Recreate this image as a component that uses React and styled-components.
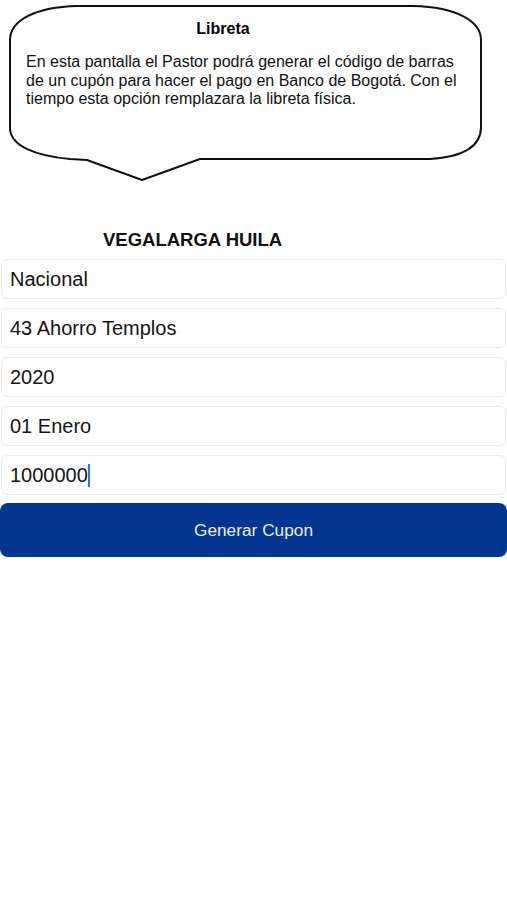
import React from "react";
import styled, { createGlobalStyle } from "styled-components";

const Global = createGlobalStyle`
  html, body { margin: 0; padding: 0; background: #ffffff; }
  body { font-family: "Liberation Sans", Arial, sans-serif; }
`;

const Page = styled.div`
  width: 507px;
  min-height: 900px;
  background: #ffffff;
  display: flex;
  flex-direction: column;
`;

const Bubble = styled.section`
  position: relative;
  height: 186px;
  padding: 19px 0 0 26px;
  box-sizing: border-box;
`;

const BubbleShape = styled.svg`
  position: absolute;
  left: 0;
  top: 0;
  z-index: 0;
`;

const BubbleTitle = styled.h2`
  position: relative;
  margin: 0;
  width: 394px;
  text-align: center;
  font-family: "Liberation Sans", Arial, sans-serif;
  font-weight: 700;
  font-size: 16px;
  line-height: 19px;
  color: #000;
`;

const BubbleText = styled.p`
  position: relative;
  margin: 15px 0 0;
  font-family: "Liberation Sans", Arial, sans-serif;
  font-size: 16px;
  line-height: 18.5px;
  color: #111;
  white-space: nowrap;
`;

const Title = styled.h1`
  margin: 43px 0 8px;
  padding-left: 103px;
  font-family: "Liberation Sans", Arial, sans-serif;
  font-weight: 700;
  font-size: 18.5px;
  line-height: 22px;
  color: #111;
`;

const Form = styled.div`
  display: flex;
  flex-direction: column;
  gap: 9px;
  padding: 0 1px;
`;

const Field = styled.div`
  height: 40px;
  box-sizing: border-box;
  border: 1px solid #ebebeb;
  border-radius: 6px;
  box-shadow: 0 0 1px rgba(0, 0, 0, 0.04);
  display: flex;
  align-items: center;
  padding-left: 8px;
  font-family: "Liberation Sans", Arial, sans-serif;
  font-size: 20px;
  color: #141414;
`;

const Caret = styled.span`
  display: inline-block;
  width: 2px;
  height: 23px;
  background: #3b6fe0;
`;

const Button = styled.button`
  margin: 8px 0 0;
  height: 54px;
  width: 507px;
  border: none;
  border-radius: 8px;
  background: #033690;
  color: #e9eef8;
  font-family: "Liberation Sans", Arial, sans-serif;
  font-size: 17.3px;
  cursor: pointer;
`;

const fields = ["Nacional", "43 Ahorro Templos", "2020", "01 Enero"];

export default function App() {
  return (
    <Page>
      <Global />
      <Bubble>
        <BubbleShape width="507" height="186" viewBox="0 0 507 186">
          <path
            d="M 77 6 L 413 6 C 458 7, 481 22, 481 40 L 481 127 C 481 147, 462 157, 430 159 L 200 159 L 142 180 L 87 160 L 70 159 C 36 156, 10 146, 10 128 L 10 40 C 10 20, 36 7, 77 6 Z"
            fill="#ffffff"
            stroke="#111"
            strokeWidth="2"
            strokeLinejoin="round"
          />
        </BubbleShape>
        <BubbleTitle>Libreta</BubbleTitle>
        <BubbleText>
          En esta pantalla el Pastor podrá generar el código de barras
          <br />
          de un cupón para hacer el pago en Banco de Bogotá. Con el
          <br />
          tiempo esta opción remplazara la libreta física.
        </BubbleText>
      </Bubble>
      <Title>VEGALARGA HUILA</Title>
      <Form>
        {fields.map((f) => (
          <Field key={f}>{f}</Field>
        ))}
        <Field>
          1000000
          <Caret />
        </Field>
      </Form>
      <Button>Generar Cupon</Button>
    </Page>
  );
}
